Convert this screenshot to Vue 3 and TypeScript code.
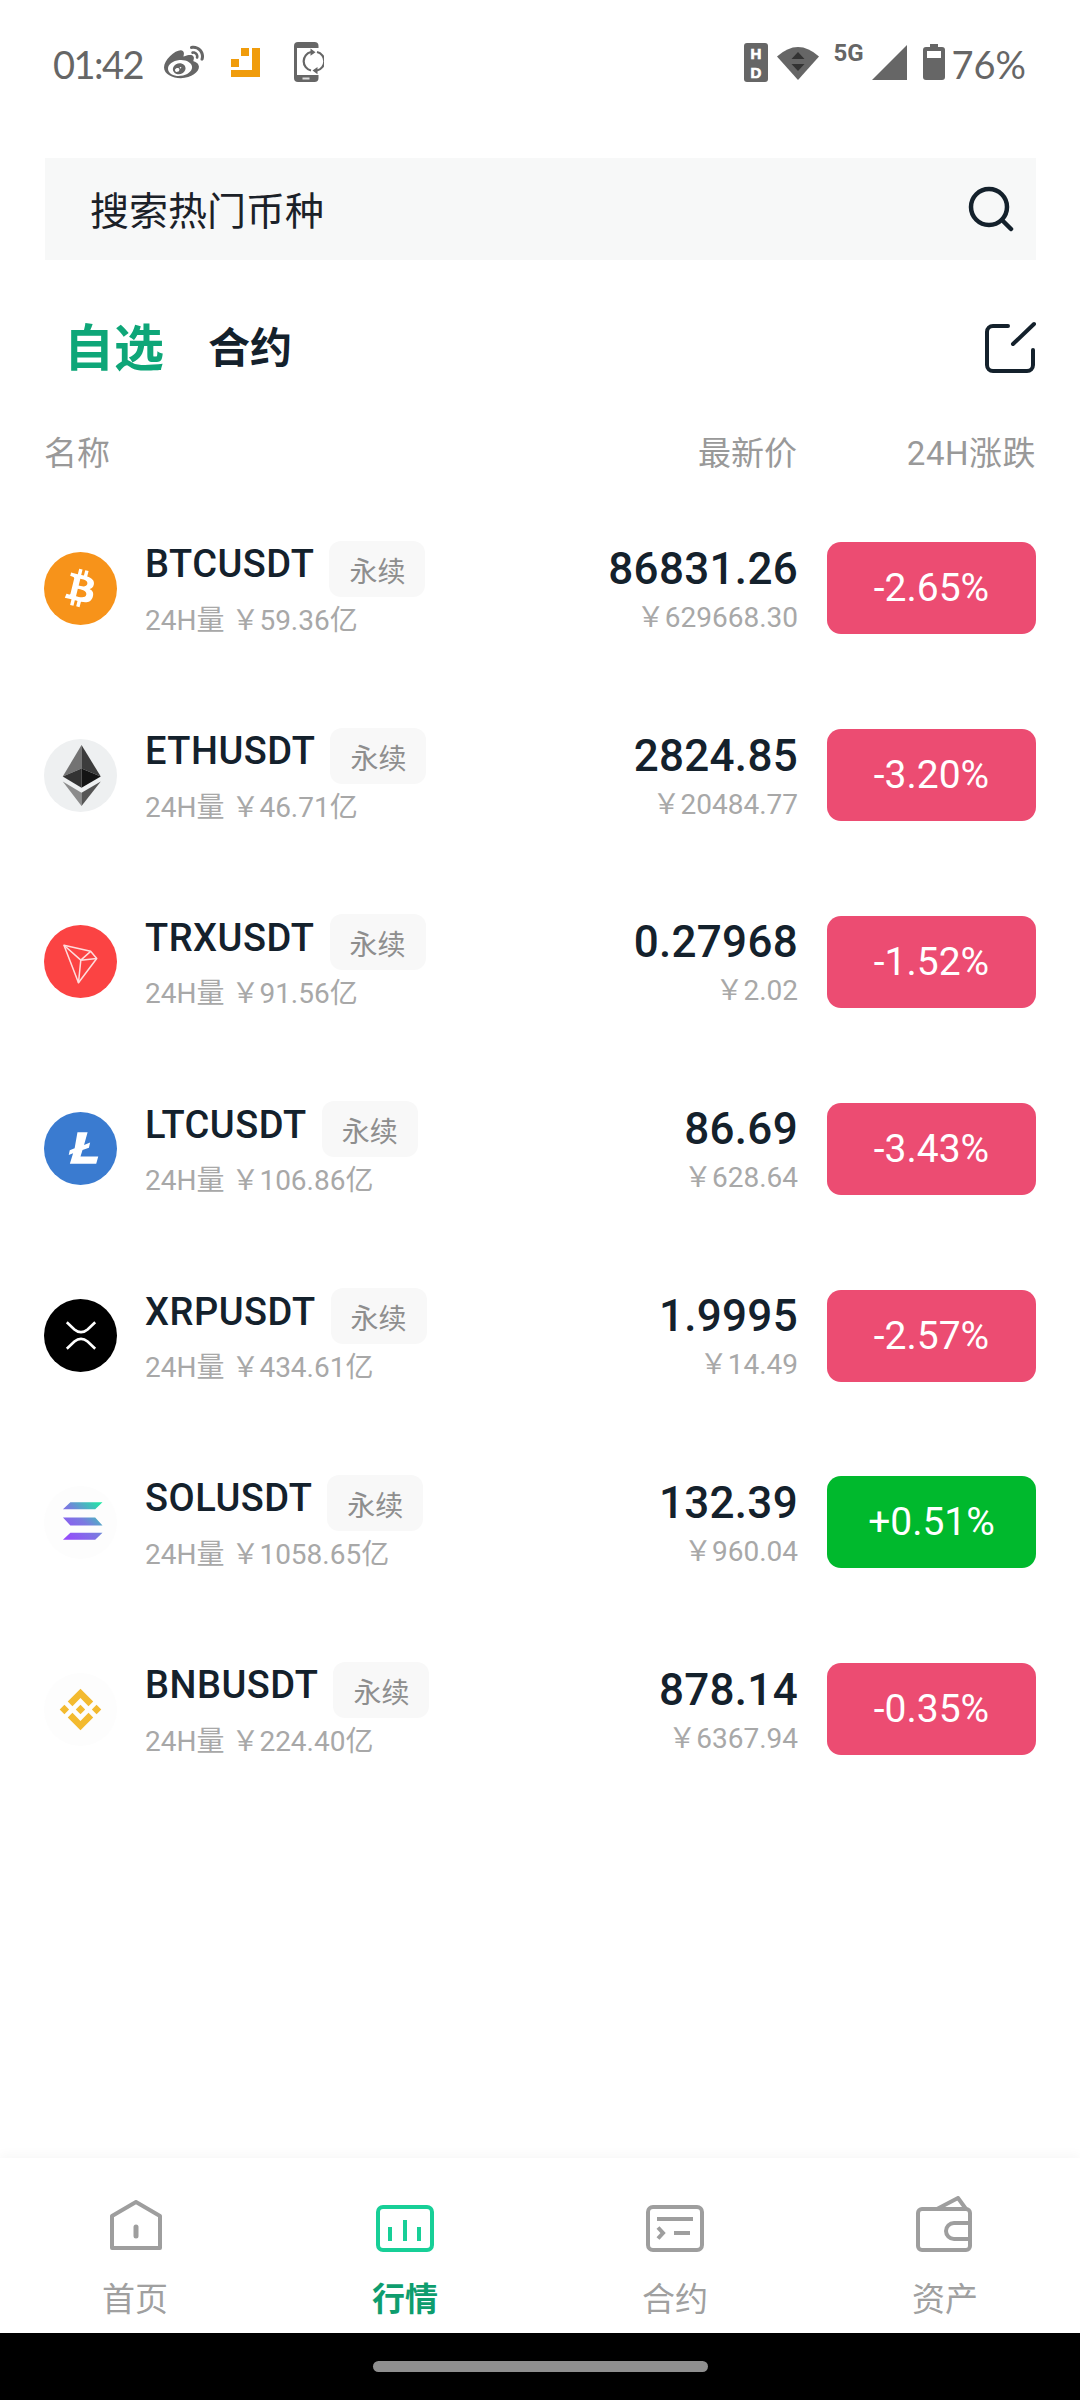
<script setup lang="ts">
interface Coin {
  key: string
  name: string
  vol: string
  price: string
  cny: string
  change: string
  up?: boolean
}

const coins: Coin[] = [
  { key: 'btc', name: 'BTCUSDT', vol: '59.36亿', price: '86831.26', cny: '629668.30', change: '-2.65%' },
  { key: 'eth', name: 'ETHUSDT', vol: '46.71亿', price: '2824.85', cny: '20484.77', change: '-3.20%' },
  { key: 'trx', name: 'TRXUSDT', vol: '91.56亿', price: '0.27968', cny: '2.02', change: '-1.52%' },
  { key: 'ltc', name: 'LTCUSDT', vol: '106.86亿', price: '86.69', cny: '628.64', change: '-3.43%' },
  { key: 'xrp', name: 'XRPUSDT', vol: '434.61亿', price: '1.9995', cny: '14.49', change: '-2.57%' },
  { key: 'sol', name: 'SOLUSDT', vol: '1058.65亿', price: '132.39', cny: '960.04', change: '+0.51%', up: true },
  { key: 'bnb', name: 'BNBUSDT', vol: '224.40亿', price: '878.14', cny: '6367.94', change: '-0.35%' },
]
</script>

<template>
  <div class="page">
    <!-- status bar -->
    <div class="status">
      <span class="time">01:42</span>
      <svg class="st-weibo" width="40" height="40" viewBox="0 0 24 24" fill="#666">
        <path d="M10.098 20.323c-3.977.391-7.414-1.406-7.672-4.02-.259-2.609 2.759-5.047 6.74-5.441 3.979-.394 7.413 1.404 7.671 4.018.259 2.6-2.759 5.049-6.737 5.439l-.002.004zM9.05 17.219c-.384.616-1.208.884-1.829.602-.612-.279-.793-.991-.406-1.593.379-.595 1.176-.861 1.793-.601.622.263.82.972.442 1.592zm1.27-1.627c-.141.237-.449.353-.689.253-.236-.09-.313-.361-.177-.586.138-.227.436-.346.672-.24.239.09.315.36.18.601l.014-.028zm.176-2.719c-1.893-.493-4.033.45-4.857 2.118-.836 1.704-.026 3.591 1.886 4.21 1.983.64 4.318-.341 5.132-2.179.8-1.793-.201-3.642-2.161-4.149zm7.563-1.224c-.346-.105-.57-.18-.405-.615.375-.977.42-1.804 0-2.404-.781-1.112-2.915-1.053-5.364-.03 0 0-.766.331-.571-.271.376-1.217.315-2.224-.27-2.809-1.338-1.337-4.869.045-7.888 3.08C1.309 10.87 0 13.273 0 15.348c0 3.981 5.099 6.395 10.086 6.395 6.536 0 10.888-3.801 10.888-6.82 0-1.822-1.547-2.854-2.915-3.284v.01zm1.908-5.092c-.766-.856-1.908-1.187-2.96-.962-.436.09-.706.511-.616.932.09.42.511.691.932.616.511-.105 1.067.044 1.442.465.376.421.466.977.316 1.473-.136.406.089.856.51.992.405.119.857-.105.992-.512.33-1.021.12-2.178-.646-3.035l.03.031zm2.418-2.195c-1.576-1.757-3.905-2.419-6.054-1.968-.496.104-.812.597-.706 1.092.105.496.597.812 1.092.706 1.532-.331 3.185.15 4.296 1.383 1.112 1.246 1.429 2.943.947 4.416-.165.48.106 1.007.586 1.157.479.165.991-.104 1.157-.586.675-2.088.241-4.478-1.338-6.235l.02.003z" />
      </svg>
      <svg class="st-orange" width="29" height="29" viewBox="0 0 29 29" fill="#f09c0c">
        <rect x="10" width="8" height="8" />
        <rect y="11" width="8" height="8" />
        <path d="M21 0h8v29H0v-7h21z" />
      </svg>
      <svg class="st-phone" width="30" height="40" viewBox="0 0 30 40">
        <rect width="24.5" height="40" rx="4" fill="#666" />
        <rect x="3" y="6" width="18.5" height="27" fill="#fff" />
        <rect x="12" y="6" width="18" height="27" fill="#fff" />
        <rect x="8.500" y="35.500" width="7" height="2" fill="#ddd" />
        <g fill="none" stroke="#666" stroke-width="2.200">
          <path d="M17 28.500a9.500 9.500 0 0 1 0-18.500" />
          <path d="M23 10a9.500 9.500 0 0 1 0 18.500" />
        </g>
        <path d="M16.500 6.500l5 3.800-5 3.500zM23.500 25l-5 3.500 5 3.800z" fill="#666" />
      </svg>
      <div class="st-spacer"></div>
      <svg class="st-hd" width="24" height="39" viewBox="0 0 24 39">
        <rect width="24" height="39" rx="3" fill="#666" />
        <text x="12" y="16" text-anchor="middle" class="hd-text">H</text>
        <text x="12" y="34.500" text-anchor="middle" class="hd-text">D</text>
      </svg>
      <svg class="st-wifi" width="42" height="35" viewBox="0 0 42 35">
        <path d="M0 11.500Q21-7.500 42 11.500L21 35z" fill="#666" />
        <path d="M21 7l6.500 7h-13zM14.500 19h13L21 26z" fill="#333" />
      </svg>
      <span class="st-5g">5G</span>
      <svg class="st-signal" width="35" height="35" viewBox="0 0 35 35"><path d="M0 35L35 0v35z" fill="#666" /></svg>
      <svg class="st-batt" width="22" height="36" viewBox="0 0 22 36">
        <rect x="7" width="8" height="6" fill="#666" />
        <rect y="3" width="22" height="33" rx="3" fill="#666" />
        <rect x="4" y="7" width="14" height="7" fill="#fff" />
      </svg>
      <span class="batt-text">76%</span>
    </div>

    <!-- search -->
    <div class="search">
      <span class="search-text">搜索热门币种</span>
      <svg width="46" height="46" viewBox="0 0 46 46" fill="none" stroke="#14212c" stroke-width="4.500" stroke-linecap="round">
        <circle cx="21" cy="21" r="18" />
        <path d="M34 34l9 9" />
      </svg>
    </div>

    <!-- tabs -->
    <div class="tabs">
      <span class="tab-on">自选</span>
      <span class="tab-off">合约</span>
      <svg class="edit" width="52" height="52" viewBox="0 0 52 52" fill="none" stroke="#14212c" stroke-width="4" stroke-linecap="round">
        <path d="M24 5H9a6 6 0 0 0-6 6v33a6 6 0 0 0 6 6h34a6 6 0 0 0 6-6V29" />
        <path d="M29 23L50 3" />
      </svg>
    </div>

    <!-- table header -->
    <div class="head">
      <span class="head-name">名称</span>
      <span>最新价</span>
      <span class="head-change">24H涨跌</span>
    </div>

    <!-- list -->
    <div class="list">
      <div v-for="c in coins" :key="c.key" class="row">
        <svg class="logo" width="73" height="73" viewBox="0 0 72 72">
          <template v-if="c.key === 'btc'">
            <circle cx="36" cy="36" r="36" fill="#f7931a" />
            <g transform="translate(6 6) scale(2.500)" fill="#fff" fill-rule="evenodd">
              <path d="M17.288 10.291c.24-1.59-.974-2.45-2.64-3.03l.54-2.153-1.315-.33-.525 2.107c-.345-.087-.705-.167-1.064-.25l.526-2.127-1.32-.33-.54 2.165c-.285-.067-.565-.132-.84-.2l-1.815-.45-.35 1.407s.975.225.955.236c.535.136.63.486.615.766l-1.477 5.92c-.075.166-.24.406-.614.314.015.02-.96-.24-.96-.24l-.66 1.51 1.71.426.93.242-.54 2.19 1.32.327.54-2.17c.36.1.705.19 1.05.273l-.51 2.154 1.32.33.545-2.19c2.24.427 3.93.257 4.64-1.774.57-1.637-.03-2.58-1.217-3.196.854-.193 1.5-.76 1.68-1.93h.01zm-3.01 4.22c-.404 1.64-3.157.75-4.05.53l.72-2.9c.896.23 3.757.67 3.33 2.37zm.41-4.24c-.37 1.49-2.662.735-3.405.55l.654-2.64c.744.18 3.137.524 2.75 2.084v.006z" />
            </g>
          </template>
          <template v-else-if="c.key === 'eth'">
            <circle cx="36" cy="36" r="36" fill="#eef0f1" />
            <path d="M37 6L18.500 37 37 29z" fill="#737373" />
            <path d="M37 6L56 37 37 29z" fill="#3c3c3c" />
            <path d="M18.500 37L37 29v19z" fill="#333" />
            <path d="M56 37L37 29v19z" fill="#141414" />
            <path d="M18.500 42L37 53v13z" fill="#8c8c8c" />
            <path d="M56 42L37 53v13z" fill="#555" />
          </template>
          <template v-else-if="c.key === 'trx'">
            <circle cx="36" cy="36" r="36" fill="#fb4343" />
            <g fill="none" stroke="#ffdcdc" stroke-width="1.500" stroke-linejoin="round">
              <path d="M19.700 20L46 26l6 7-18 24z" />
              <path d="M19.700 20l16.600 14.700L52 33M36.300 34.700L34 57M46 26l-9.700 8.700" />
            </g>
          </template>
          <template v-else-if="c.key === 'ltc'">
            <circle cx="36" cy="36" r="36" fill="#3a7bd0" />
            <path d="M33 20h10l-3.500 12.500 6-2.300-1.200 5-6.300 2.400-2 6.400h17.500l-2 7H25.500l3.200-10.300-4.300 1.600 1-4.600 4.800-1.900z" fill="#fff" />
          </template>
          <template v-else-if="c.key === 'xrp'">
            <circle cx="36" cy="36" r="36" fill="#000" />
            <g fill="none" stroke="#fff" stroke-width="2.600">
              <path d="M22.500 23L30 30Q36.500 35.500 43 30L50.500 23" />
              <path d="M22.500 49L30 42Q36.500 36.500 43 42L50.500 49" />
            </g>
          </template>
          <template v-else-if="c.key === 'sol'">
            <defs>
              <linearGradient id="solGrad" gradientUnits="userSpaceOnUse" x1="20" y1="54" x2="56" y2="14">
                <stop offset="0" stop-color="#9945ff" />
                <stop offset="0.500" stop-color="#7a7be0" />
                <stop offset="1" stop-color="#19f0a0" />
              </linearGradient>
            </defs>
            <circle cx="36" cy="36" r="36" fill="#fdfdfd" />
            <path d="M26 16h31.700l-7.200 7H18.700zM18.700 31h31.800l7.200 8H26zM26 46h31.700l-7.200 7H18.700z" fill="url(#solGrad)" />
          </template>
          <template v-else>
            <circle cx="36" cy="36" r="36" fill="#fdfdfd" />
            <g transform="translate(15.500 15.500) scale(1.708)" fill="#f3ba2f">
              <path d="M16.624 13.9202l2.7175 2.7154-7.353 7.353-7.353-7.352 2.7175-2.7164 4.6355 4.6595 4.6356-4.6595zm4.6366-4.6366L24 12l-2.7154 2.7164L18.5682 12l2.6924-2.7164zm-9.272.001l2.7163 2.6914-2.7164 2.7174v-.001L9.2721 12l2.7164-2.7154zm-9.2722-.001L5.4088 12l-2.6914 2.6914L0 12l2.7164-2.7164zM11.9885.0115l7.353 7.329-2.7174 2.7154-4.6356-4.6356-4.6355 4.6595-2.7174-2.7154 7.353-7.353z" />
            </g>
          </template>
        </svg>
        <div class="info">
          <div class="title">
            <span class="name">{{ c.name }}</span>
            <span class="tag">永续</span>
          </div>
          <div class="vol">24H量 ￥{{ c.vol }}</div>
        </div>
        <div class="quote">
          <div class="price">{{ c.price }}</div>
          <div class="cny">￥{{ c.cny }}</div>
        </div>
        <div class="change" :class="{ up: c.up }">{{ c.change }}</div>
      </div>
    </div>

    <!-- bottom tabs -->
    <div class="tabbar">
      <div class="tabitem">
        <div class="tabicon">
          <svg class="ic-home" width="52" height="50" viewBox="0 0 52 50" fill="none" stroke="#9e9e9e" stroke-width="4" stroke-linejoin="round">
            <path d="M2 48V16L26 2l24 14v32z" />
            <path d="M26 27v9" stroke-width="5" stroke-linecap="round" />
          </svg>
        </div>
        <span>首页</span>
      </div>
      <div class="tabitem active">
        <div class="tabicon">
          <svg width="58" height="47" viewBox="0 0 58 47" fill="none" stroke="#17cf97" stroke-width="4">
            <rect x="2" y="2" width="54" height="43" rx="5" />
            <path d="M14 22v14M29 15v21M43 22v14" />
          </svg>
        </div>
        <span>行情</span>
      </div>
      <div class="tabitem">
        <div class="tabicon">
          <svg width="58" height="47" viewBox="0 0 58 47" fill="none" stroke="#9e9e9e" stroke-width="4">
            <rect x="2" y="2" width="54" height="43" rx="5" />
            <path d="M11 14h36M28 28h16M12 22.500l5 5.500-5 5.500" />
          </svg>
        </div>
        <span>合约</span>
      </div>
      <div class="tabitem">
        <div class="tabicon">
          <svg class="ic-wallet" width="56" height="56" viewBox="0 0 56 56" fill="none" stroke="#9e9e9e" stroke-width="4" stroke-linejoin="round">
            <path d="M54 27V17a4 4 0 0 0-4-4H6a4 4 0 0 0-4 4v33a4 4 0 0 0 4 4h44a4 4 0 0 0 4-4v-7" />
            <path d="M54 27H38a8 8 0 0 0 0 16h16z" />
            <path d="M21 13L42 2l8 11" />
          </svg>
        </div>
        <span>资产</span>
      </div>
    </div>

    <!-- android nav -->
    <div class="navbar"><div class="pill"></div></div>
  </div>
</template>

<style>
html,
body {
  margin: 0;
  background: #fff;
}
</style>

<style scoped>
.page {
  width: 1080px;
  height: 2400px;
  display: flex;
  flex-direction: column;
  font-family: Roboto, "Noto Sans CJK SC", sans-serif;
  background: #fff;
  overflow: hidden;
}

.status {
  height: 124px;
  flex: none;
  display: flex;
  align-items: center;
  padding: 0 54px 0 53px;
  box-sizing: border-box;
  color: #666;
}
.time {
  font-family: Lato, sans-serif;
  font-weight: 400;
  font-size: 38px;
  letter-spacing: -1.5px;
  width: 111px;
  padding-top: 3px;
}
.st-orange {
  margin-left: 27px;
}
.st-phone {
  margin-left: 34px;
}
.st-spacer {
  flex: 1;
}
.hd-text {
  font-family: "Liberation Sans", sans-serif;
  font-weight: 700;
  font-size: 15px;
  fill: #fff;
  stroke: #fff;
  stroke-width: 0.7px;
}
.st-wifi {
  margin-left: 9px;
}
.st-5g {
  margin-left: 14px;
  width: 39px;
  font-size: 24px;
  font-weight: 700;
  line-height: 24px;
  margin-top: -18px;
}
.st-batt {
  margin-left: 16px;
}
.batt-text {
  margin-left: 6px;
  font-family: Lato, sans-serif;
  font-weight: 400;
  font-size: 38px;
  padding-top: 3px;
}

.search {
  margin: 34px 44px 0 45px;
  height: 102px;
  flex: none;
  background: #f7f8f8;
  display: flex;
  align-items: center;
  justify-content: space-between;
  padding: 0 22px 0 45px;
}
.search-text {
  font-size: 39px;
  color: #1b2128;
  margin-top: -2px;
}

.tabs {
  margin-top: 34px;
  height: 100px;
  flex: none;
  display: flex;
  align-items: center;
  padding: 0 44px 0 64px;
}
.tab-on {
  font-size: 50px;
  font-weight: 700;
  color: #0ea678;
}
.tab-off {
  margin-left: 44px;
  font-size: 42px;
  font-weight: 700;
  color: #14212c;
}
.edit {
  margin-left: auto;
  margin-top: 6px;
}

.head {
  margin: 37px 44px 0;
  height: 40px;
  flex: none;
  display: flex;
  align-items: center;
  gap: 30px;
  font-size: 33px;
  color: #999;
}
.head-name {
  flex: 1;
}
.head-change {
  width: 209px;
  text-align: right;
  letter-spacing: 0.5px;
}

.list {
  flex: 1;
  padding: 24px 44px 0;
}
.row {
  height: 186.8px;
  display: flex;
  align-items: center;
}
.logo {
  flex: none;
}
.info {
  flex: 1;
  margin-left: 28px;
}
.title {
  display: flex;
  align-items: center;
  height: 56px;
  margin-top: 3px;
}
.name {
  font-size: 38px;
  font-weight: 500;
  letter-spacing: 0.5px;
  color: #14212c;
  margin-bottom: 9px;
}
.tag {
  margin-left: 15px;
  height: 56px;
  line-height: 64px;
  padding: 0 20px;
  border-radius: 12px;
  background: #f8f8f8;
  font-size: 28px;
  color: #8e8e8e;
}
.vol {
  margin-top: 6px;
  height: 36px;
  line-height: 36px;
  font-size: 28px;
  color: #a8a8a8;
}
.quote {
  text-align: right;
  margin-top: 6px;
}
.price {
  font-size: 44px;
  font-weight: 500;
  letter-spacing: 0.3px;
  line-height: 52px;
  color: #14212c;
  margin-top: -4px;
}
.cny {
  font-size: 28px;
  line-height: 36px;
  color: #a8a8a8;
  margin-top: 5px;
}
.change {
  margin-left: 29px;
  width: 209px;
  height: 92px;
  line-height: 92px;
  text-align: center;
  border-radius: 14px;
  background: #ec4c72;
  color: #fff;
  font-size: 39px;
}
.change.up {
  background: #00b92d;
}

.tabbar {
  height: 175px;
  flex: none;
  display: flex;
  box-shadow: 0 -4px 10px rgba(0, 0, 0, 0.03);
  background: #fff;
  padding-top: 38px;
  box-sizing: border-box;
}
.tabitem {
  width: 270px;
  display: flex;
  flex-direction: column;
  align-items: center;
  font-size: 33px;
  color: #a0a0a0;
}
.tabicon {
  height: 56px;
  display: flex;
  align-items: flex-end;
  margin-bottom: 21px;
}
.ic-home {
  margin-left: 2px;
  margin-bottom: 2px;
}
.ic-wallet {
  margin-right: 2px;
}
.tabitem.active {
  color: #0e9d6e;
  font-weight: 700;
}

.navbar {
  height: 67px;
  flex: none;
  background: #000;
  display: flex;
  align-items: center;
  justify-content: center;
}
.pill {
  width: 335px;
  height: 11px;
  border-radius: 6px;
  background: #8f8f8f;
}
</style>
